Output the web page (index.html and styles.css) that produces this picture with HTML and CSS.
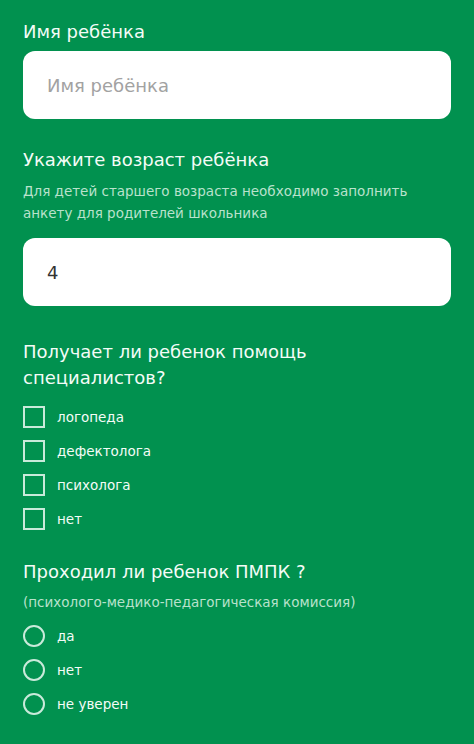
FILE: index.html
```html
<!DOCTYPE html>
<html lang="ru">
<head>
  <meta charset="UTF-8" />
  <meta name="viewport" content="width=device-width, initial-scale=1.0" />
  <title>Анкета</title>
  <link rel="stylesheet" href="styles.css">
</head>
<body>
  <form class="survey">
    <label class="question" for="child-name">Имя ребёнка</label>
    <input class="text-input name-input" id="child-name" type="text" placeholder="Имя ребёнка">

    <label class="question age-question" for="child-age">Укажите возраст ребёнка</label>
    <p class="hint age-hint">Для детей старшего возраста необходимо заполнить анкету для родителей школьника</p>
    <input class="text-input age-input" id="child-age" type="text" value="4">

    <p class="question help-question">Получает ли ребенок помощь специалистов?</p>
    <div class="options help-options">
      <label class="option"><input type="checkbox" class="box"> логопеда</label>
      <label class="option"><input type="checkbox" class="box"> дефектолога</label>
      <label class="option"><input type="checkbox" class="box"> психолога</label>
      <label class="option"><input type="checkbox" class="box"> нет</label>
    </div>

    <p class="question pmpk-question">Проходил ли ребенок ПМПК ?</p>
    <p class="hint pmpk-hint">(психолого-медико-педагогическая комиссия)</p>
    <div class="options pmpk-options">
      <label class="option"><input type="radio" name="pmpk" class="round"> да</label>
      <label class="option"><input type="radio" name="pmpk" class="round"> нет</label>
      <label class="option"><input type="radio" name="pmpk" class="round"> не уверен</label>
    </div>
  </form>
</body>
</html>
```

FILE: styles.css
```css
:root {
  --green: #01914f;
  --text: #f4fcf7;
  --soft-text: #b9e2cc;
  --line: #c9eada;
  --radius: 12px;
}

* {
  margin: 0;
  padding: 0;
  box-sizing: border-box;
}

body, html {
  height: 100%;
  background: var(--green);
  color: var(--text);
  font-family: 'DejaVu Sans', sans-serif;
}

.survey {
  display: flex;
  flex-direction: column;
  padding: 20px 23px 0;
}

.question {
  display: block;
  font-size: 18px;
  line-height: 24px;
}

.hint {
  font-size: 13.5px;
  line-height: 22px;
  color: var(--soft-text);
}

.text-input {
  width: 100%;
  height: 68px;
  margin-top: 7px;
  padding: 0 24px;
  border: none;
  border-radius: var(--radius);
  background: #fff;
  font-family: inherit;
  font-size: 18px;
  color: #333;
  outline: none;
}

.text-input::placeholder {
  color: #a2a2a2;
}

.age-question {
  margin-top: 29px;
}

.age-hint {
  margin-top: 8px;
  padding-right: 20px;
}

.age-input {
  margin-top: 14px;
}

.help-question {
  margin-top: 33px;
  line-height: 26px;
  padding-right: 140px;
}

.options {
  display: flex;
  flex-direction: column;
  gap: 12px;
}

.help-options {
  margin-top: 15px;
}

.option {
  display: flex;
  align-items: center;
  gap: 12px;
  height: 22px;
  font-size: 13.5px;
  color: var(--text);
}

.box, .round {
  appearance: none;
  width: 22px;
  height: 22px;
  border: 2px solid var(--line);
  background: transparent;
  flex-shrink: 0;
}

.round {
  border-radius: 50%;
}

.pmpk-question {
  margin-top: 30px;
}

.pmpk-hint {
  margin-top: 7px;
}

.pmpk-options {
  margin-top: 12px;
}
```
